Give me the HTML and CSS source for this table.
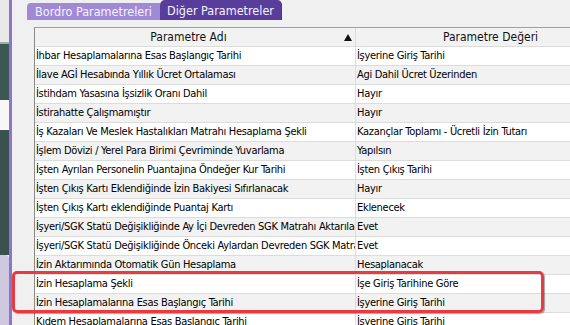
FILE: index.html
```html
<!DOCTYPE html>
<html lang="tr">
<head>
<meta charset="utf-8">
<title>Parametreler</title>
<link rel="stylesheet" href="styles.css">
</head>
<body>
<div class="screen">
  <div class="backdrop">
    <div class="bd-light"></div>
    <div class="bd-line"></div>
    <div class="bd-dark"></div>
    <div class="bd-white"></div>
    <div class="bd-dark bd-dark2"></div>
    <div class="bd-lav"></div>
  </div>
  <div class="edge"></div>
  <div class="panel">
    <div class="tabs">
      <div class="tab tab-inactive">Bordro Parametreleri</div>
      <div class="tab tab-active">Diğer Parametreler</div>
    </div>
    <div class="grid">
      <div class="cell head head-name"><span class="head-label">Parametre Adı</span><span class="sort"><svg width="8" height="7" viewBox="0 0 8 7"><polygon points="4,0 8,7 0,7" fill="#111"/></svg></span></div>
      <div class="cell head head-value">Parametre Değeri</div>

      <div class="cell name">İhbar Hesaplamalarına Esas Başlangıç Tarihi</div><div class="cell value">İşyerine Giriş Tarihi</div>
      <div class="cell name alt">İlave AGİ Hesabında Yıllık Ücret Ortalaması</div><div class="cell value alt">Agi Dahil Ücret Üzerinden</div>
      <div class="cell name">İstihdam Yasasına İşsizlik Oranı Dahil</div><div class="cell value">Hayır</div>
      <div class="cell name alt">İstirahatte Çalışmamıştır</div><div class="cell value alt">Hayır</div>
      <div class="cell name">İş Kazaları Ve Meslek Hastalıkları Matrahı Hesaplama Şekli</div><div class="cell value">Kazançlar Toplamı - Ücretli İzin Tutarı</div>
      <div class="cell name alt">İşlem Dövizi / Yerel Para Birimi Çevriminde Yuvarlama</div><div class="cell value alt">Yapılsın</div>
      <div class="cell name">İşten Ayrılan Personelin Puantajına Öndeğer Kur Tarihi</div><div class="cell value">İşten Çıkış Tarihi</div>
      <div class="cell name alt">İşten Çıkış Kartı Eklendiğinde İzin Bakiyesi Sıfırlanacak</div><div class="cell value alt">Hayır</div>
      <div class="cell name">İşten Çıkış Kartı eklendiğinde Puantaj Kartı</div><div class="cell value">Eklenecek</div>
      <div class="cell name alt">İşyeri/SGK Statü Değişikliğinde Ay İçi Devreden SGK Matrahı Aktarılacak</div><div class="cell value alt">Evet</div>
      <div class="cell name">İşyeri/SGK Statü Değişikliğinde Önceki Aylardan Devreden SGK Matrahı</div><div class="cell value">Evet</div>
      <div class="cell name alt">İzin Aktarımında Otomatik Gün Hesaplama</div><div class="cell value alt">Hesaplanacak</div>
      <div class="cell name">İzin Hesaplama Şekli</div><div class="cell value">İşe Giriş Tarihine Göre</div>
      <div class="cell name alt">İzin Hesaplamalarına Esas Başlangıç Tarihi</div><div class="cell value alt">İşyerine Giriş Tarihi</div>
      <div class="cell name">Kıdem Hesaplamalarına Esas Başlangıç Tarihi</div><div class="cell value">İşyerine Giriş Tarihi</div>
    </div>
  </div>
  <div class="highlight"></div>
</div>
</body>
</html>
```

FILE: styles.css
```css
* { box-sizing: border-box; }
html, body {
  margin: 0;
  padding: 0;
  width: 570px;
  height: 325px;
  overflow: hidden;
  background: #f0f0f0;
}
.screen {
  position: relative;
  display: flex;
  width: 570px;
  height: 325px;
  overflow: hidden;
  font-family: "DejaVu Sans Condensed", "DejaVu Sans", sans-serif;
}
.backdrop {
  width: 9px;
  flex: none;
  display: flex;
  flex-direction: column;
}
.bd-light { height: 42px; background: #e9e9e9; }
.bd-line { height: 2px; background: #8fb3aa; }
.bd-dark { height: 56px; background: #3d5753; }
.bd-white { height: 30px; background: #f7f7f7; }
.bd-dark2 { height: 125px; background: #3a524e; }
.bd-lav { flex: 1; background: #cdc8de; border-top-right-radius: 4px; }
.edge {
  width: 3px;
  flex: none;
  background: #8c76c9;
}
.panel {
  flex: 1;
  min-width: 0;
  background: #f0f0f0;
  display: flex;
  flex-direction: column;
}
.tabs {
  height: 20px;
  display: flex;
  align-items: flex-end;
  padding-left: 15px;
}
.tab {
  font-family: "DejaVu Sans Condensed", "DejaVu Sans", sans-serif;
  font-size: 12.5px;
  color: #f6f3ff;
  display: flex;
  align-items: center;
  justify-content: center;
}
.tab-inactive {
  width: 133px;
  height: 17px;
  background: #a08ad6;
  border-top-left-radius: 4px;
}
.tab-active {
  width: 122px;
  height: 20px;
  background: #583d9a;
  border-top-left-radius: 5px;
  border-top-right-radius: 5px;
  border-right: 1px solid #4a3286;
}
.grid {
  margin-top: 7px;
  margin-left: 22px;
  width: 590px;
  display: grid;
  grid-template-columns: 321px 268px;
  border-top: 1px solid #a0a0a0;
  border-left: 1px solid #8a8a8a;
  font-size: 11px;
  letter-spacing: -0.3px;
  color: #000;
}
.cell {
  height: 19px;
  line-height: 18px;
  border-bottom: 1px solid #dcdcdc;
  white-space: nowrap;
  overflow: hidden;
  background: #fff;
  padding-left: 1px;
}
.cell.alt { background: #f2f2f2; }
.name { border-right: 1px solid #dcdcdc; }
.head {
  background: #f2f2f2;
  color: #111;
  font-size: 12px;
  letter-spacing: 0;
}
.head-name {
  display: flex;
  border-right: 1px solid #dcdcdc;
}
.head-label { flex: 1; text-align: center; }
.sort {
  width: 14px;
  display: flex;
  align-items: center;
  justify-content: center;
}
.head-value { text-align: center; }
.highlight {
  position: absolute;
  left: 12px;
  top: 271px;
  width: 532px;
  height: 42px;
  border: 3px solid #e83a3f;
  border-radius: 5px;
  box-shadow: 1px 1px 1px rgba(0,0,0,0.35);
}
```
